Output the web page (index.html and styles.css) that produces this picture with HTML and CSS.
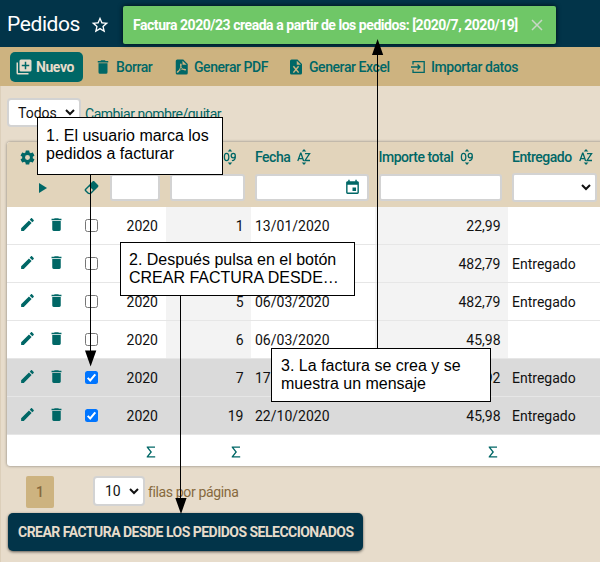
FILE: index.html
```html
<!DOCTYPE html>
<html lang="es">
<head>
<meta charset="utf-8">
<title>Pedidos</title>
<link rel="stylesheet" href="styles.css">
</head>
<body>
<svg class="defs" width="0" height="0">
  <symbol id="pencil" viewBox="0 0 24 24"><path d="M20.71,7.04C21.1,6.65 21.1,6 20.71,5.63L18.37,3.29C18,2.9 17.35,2.9 16.96,3.29L15.12,5.12L18.87,8.87M3,17.25V21H6.75L17.81,9.93L14.06,6.18L3,17.25Z"/></symbol>
  <symbol id="trash" viewBox="0 0 24 24"><path d="M19,4H15.5L14.5,3H9.5L8.5,4H5V6H19M6,19A2,2 0 0,0 8,21H16A2,2 0 0,0 18,19V7H6V19Z"/></symbol>
  <symbol id="sigma" viewBox="0 0 10 12"><path d="M.7 .4H9V1.7H2.6L6 6 2.6 10.3H9.2V11.6H.7V10.5L4.3 6 .7 1.5Z"/></symbol>
  <symbol id="num" viewBox="0 0 14 16"><path d="M7 0 9.3 2.4H4.7ZM7 16 4.7 13.6H9.3Z"/><path class="ln" d="M3.6 4.3C1.9 4.3 1.4 5.7 1.4 8S1.9 11.7 3.6 11.7 5.8 10.3 5.8 8 5.3 4.3 3.6 4.3ZM12.3 6.7C12.3 5.2 11.5 4.3 10.3 4.3S8.2 5.3 8.2 6.6 9 8.8 10.2 8.8 12.3 7.9 12.3 6.7C12.6 10 11.4 11.7 8.9 11.7"/></symbol>
  <symbol id="az" viewBox="0 0 14 16"><path d="M7 0 9.3 2.4H4.7ZM7 16 4.7 13.6H9.3Z"/><path class="ln" d="M.8 12 3.6 4.2H4L6.6 12M1.8 9.6H5.7M8 4.6H12.6L8 11.5H13"/></symbol>
</svg>

<header class="top">
  <h1>Pedidos</h1>
  <svg class="star" viewBox="0 0 24 24"><path d="M12,15.39L8.24,17.66L9.23,13.38L5.91,10.5L10.29,10.13L12,6.09L13.71,10.13L18.09,10.5L14.77,13.38L15.76,17.66M22,9.24L14.81,8.63L12,2L9.19,8.63L2,9.24L7.45,13.97L5.82,21L12,17.27L18.18,21L16.54,13.97L22,9.24Z"/></svg>
  <div class="toast"><span>Factura 2020/23 creada a partir de los pedidos: [2020/7, 2020/19]</span><svg viewBox="0 0 12 12"><path d="M1 1 11 11M11 1 1 11"/></svg></div>
</header>

<nav class="tools">
  <a class="new"><svg class="i18" viewBox="0 0 24 24"><path d="M19,11H15V15H13V11H9V9H13V5H15V9H19M20,2H8A2,2 0 0,0 6,4V16A2,2 0 0,0 8,18H20A2,2 0 0,0 22,16V4A2,2 0 0,0 20,2M4,6H2V20A2,2 0 0,0 4,22H18V20H4V6Z"/></svg>Nuevo</a>
  <a class="t-del"><svg class="i18"><use href="#trash"/></svg>Borrar</a>
  <a class="t-pdf"><svg class="i18" viewBox="0 0 24 24"><path d="M14,9H19.5L14,3.5V9M7,2H15L21,8V20A2,2 0 0,1 19,22H7C5.89,22 5,21.1 5,20V4A2,2 0 0,1 7,2M11.93,12.44C12.34,13.34 12.86,14.08 13.46,14.59L13.87,14.91C13,15.07 11.8,15.35 10.53,15.84L10.42,15.88L10.92,14.84C11.37,13.97 11.7,13.18 11.93,12.44M18.41,16.25C18.59,16.07 18.68,15.84 18.69,15.59C18.72,15.39 18.67,15.2 18.57,15.04C18.28,14.57 17.53,14.35 16.29,14.35L15,14.42L14.13,13.84C13.5,13.32 12.93,12.41 12.53,11.28L12.57,11.14C12.9,9.81 13.21,8.2 12.55,7.54A0.85,0.85 0 0,0 11.94,7.3H11.7C11.33,7.3 11,7.69 10.91,8.07C10.54,9.4 10.76,10.13 11.13,11.34V11.35C10.88,12.23 10.56,13.25 10.05,14.28L9.09,16.08L8.2,16.57C7,17.32 6.43,18.16 6.32,18.69C6.28,18.88 6.3,19.05 6.37,19.23L6.4,19.28L6.88,19.59L7.32,19.7C8.13,19.7 9.05,18.75 10.29,16.63L10.47,16.56C11.5,16.23 12.78,16 14.5,15.81C15.53,16.32 16.74,16.55 17.5,16.55C17.94,16.55 18.24,16.44 18.41,16.25Z"/></svg>Generar PDF</a>
  <a class="t-xls"><svg class="i18" viewBox="0 0 24 24"><path d="M6,2H14L20,8V20A2,2 0 0,1 18,22H6A2,2 0 0,1 4,20V4A2,2 0 0,1 6,2M13,3.5V9H18.5L13,3.5Z"/><path class="x" d="M8.5 11 15.5 19.5M15.5 11 8.5 19.5"/></svg>Generar Excel</a>
  <a class="t-imp"><svg class="i14" viewBox="0 0 14 12"><path class="ln" d="M2 3.5V.7H13.2V11.3H2V8.5M0 6H9M6.5 3.5 9 6 6.5 8.5"/></svg>Importar datos</a>
</nav>

<main>
  <div class="filter"><div class="sel todos">Todos<svg class="chev" viewBox="0 0 10 7"><path d="M1 1 5 5 9 1"/></svg></div><a>Cambiar nombre/quitar</a></div>

  <section class="grid">
    <div class="row head">
      <div class="act"><svg class="cog" viewBox="0 0 24 24"><path d="M12,15.5A3.5,3.5 0 0,1 8.5,12A3.5,3.5 0 0,1 12,8.5A3.5,3.5 0 0,1 15.5,12A3.5,3.5 0 0,1 12,15.5M19.43,12.97C19.47,12.65 19.5,12.33 19.5,12C19.5,11.67 19.47,11.34 19.43,11L21.54,9.37C21.73,9.22 21.78,8.95 21.66,8.73L19.66,5.27C19.54,5.05 19.27,4.96 19.05,5.05L16.56,6.05C16.04,5.66 15.5,5.32 14.87,5.07L14.5,2.42C14.46,2.18 14.25,2 14,2H10C9.75,2 9.54,2.18 9.5,2.42L9.13,5.07C8.5,5.32 7.96,5.66 7.44,6.05L4.95,5.05C4.73,4.96 4.46,5.05 4.34,5.27L2.34,8.73C2.21,8.95 2.27,9.22 2.46,9.37L4.57,11C4.53,11.34 4.5,11.67 4.5,12C4.5,12.33 4.53,12.65 4.57,12.97L2.46,14.63C2.27,14.78 2.21,15.05 2.34,15.27L4.34,18.73C4.46,18.95 4.73,19.03 4.95,18.95L7.44,17.94C7.96,18.34 8.5,18.68 9.13,18.93L9.5,21.58C9.54,21.82 9.75,22 10,22H14C14.25,22 14.46,21.82 14.5,21.58L14.87,18.93C15.5,18.67 16.04,18.34 16.56,17.94L19.05,18.95C19.27,19.03 19.54,18.95 19.66,18.73L21.66,15.27C21.78,15.05 21.73,14.78 21.54,14.63L19.43,12.97Z"/></svg></div>
      <div></div>
      <div class="end"><svg class="srt"><use href="#num"/></svg></div>
      <div>Fecha<svg class="srt"><use href="#az"/></svg></div>
      <div>Importe total<svg class="srt"><use href="#num"/></svg></div>
      <div>Entregado<svg class="srt"><use href="#az"/></svg></div>
    </div>
    <div class="row search">
      <div class="act"><svg class="play" viewBox="0 0 8 10"><path d="M0 0 8 5 0 10Z"/></svg><svg class="eraser" viewBox="0 0 24 24"><path d="M16.24,3.56L21.19,8.5C21.97,9.29 21.97,10.55 21.19,11.34L12,20.53C10.44,22.09 7.91,22.09 6.34,20.53L2.81,17C2.03,16.21 2.03,14.95 2.81,14.16L13.41,3.56C14.2,2.78 15.46,2.78 16.24,3.56M4.22,15.58L7.76,19.11C8.54,19.9 9.8,19.9 10.59,19.11L14.12,15.58L9.17,10.63L4.22,15.58Z"/></svg></div>
      <div class="c-year"><span class="inp"></span></div>
      <div class="c-num"><span class="inp"></span></div>
      <div class="c-date"><span class="inp"><svg class="cal" viewBox="0 0 24 24"><path d="M19,19H5V8H19M16,1V3H8V1H6V3H5C3.89,3 3,3.89 3,5V19A2,2 0 0,0 5,21H19A2,2 0 0,0 21,19V5C21,3.89 20.1,3 19,3H18V1M17,12H12V17H17V12Z"/></svg></span></div>
      <div class="c-tot"><span class="inp"></span></div>
      <div class="c-ent"><span class="inp"><svg class="chev" viewBox="0 0 10 7"><path d="M1 1 5 5 9 1"/></svg></span></div>
    </div>
    <div class="row data"><div class="act"><svg><use href="#pencil"/></svg><svg><use href="#trash"/></svg><i class="cb"></i></div><div>2020</div><div class="sh">1</div><div>13/01/2020</div><div class="sh">22,99</div><div></div></div>
    <div class="row data"><div class="act"><svg><use href="#pencil"/></svg><svg><use href="#trash"/></svg><i class="cb"></i></div><div></div><div class="sh"></div><div></div><div class="sh">482,79</div><div>Entregado</div></div>
    <div class="row data"><div class="act"><svg><use href="#pencil"/></svg><svg><use href="#trash"/></svg><i class="cb"></i></div><div>2020</div><div class="sh">5</div><div>06/03/2020</div><div class="sh">482,79</div><div>Entregado</div></div>
    <div class="row data"><div class="act"><svg><use href="#pencil"/></svg><svg><use href="#trash"/></svg><i class="cb"></i></div><div>2020</div><div class="sh">6</div><div>06/03/2020</div><div class="sh">45,98</div><div></div></div>
    <div class="row data on"><div class="act"><svg><use href="#pencil"/></svg><svg><use href="#trash"/></svg><i class="cb"><svg viewBox="0 0 13 13"><path d="M2.7 6.9 5.2 9.4 10.3 3.3"/></svg></i></div><div>2020</div><div class="sh">7</div><div>17</div><div class="sh">92</div><div>Entregado</div></div>
    <div class="row data on"><div class="act"><svg><use href="#pencil"/></svg><svg><use href="#trash"/></svg><i class="cb"><svg viewBox="0 0 13 13"><path d="M2.7 6.9 5.2 9.4 10.3 3.3"/></svg></i></div><div>2020</div><div class="sh">19</div><div>22/10/2020</div><div class="sh">45,98</div><div>Entregado</div></div>
    <div class="row sum"><div></div><div><svg><use href="#sigma"/></svg></div><div><svg><use href="#sigma"/></svg></div><div></div><div><svg><use href="#sigma"/></svg></div><div></div></div>
  </section>

  <div class="pager"><span class="page">1</span><div class="sel ten">10<svg class="chev" viewBox="0 0 10 7"><path d="M1 1 5 5 9 1"/></svg></div><span class="per">filas por página</span></div>
  <div class="create">CREAR FACTURA DESDE LOS PEDIDOS SELECCIONADOS</div>
</main>

<svg class="arrows" width="600" height="562" viewBox="0 0 600 562">
  <path class="stem" d="M90.5 174V352M180.5 295V500M377.5 348V54"/>
  <path d="M85 350.5H96.3L90.6 366.5ZM175.3 498H186.6L181 514ZM372 55H383.2L377.6 39Z"/>
</svg>
<div class="note n1">1. El usuario marca los<br>pedidos a facturar</div>
<div class="note n2">2. Después pulsa en el botón<br>CREAR FACTURA DESDE…</div>
<div class="note n3">3. La factura se crea y se<br>muestra un mensaje</div>
</body>
</html>
```
FILE: styles.css
```css
* { box-sizing: border-box; }
body { margin: 0; width: 600px; height: 562px; overflow: hidden; position: relative; background: #e7dccb; font: 14px Roboto, sans-serif; color: #111; }
svg { display: block; flex: none; fill: #006766; }
.ln { fill: none; stroke: #006766; stroke-width: 1.3; }
.x { fill: none; stroke: #cdb380; stroke-width: 2; }
.defs { position: absolute; }

.top { height: 47px; background: #023449; display: flex; align-items: center; padding-left: 7px; position: relative; }
.top h1 { margin: 0; font-size: 21px; font-weight: 400; letter-spacing: -.4px; line-height: 24px; color: #fff; width: 83px; white-space: nowrap; }
.star { width: 20px; height: 20px; fill: #fff; margin-top: 3px; }
.toast { position: absolute; left: 123px; top: 6px; width: 433px; height: 38px; background: #6fc767; border-radius: 2px; box-shadow: 0 0 5px rgba(0,0,0,.8); display: flex; align-items: center; justify-content: space-between; padding: 0 13px 0 10px; color: #fff; font-weight: 700; font-size: 14px; letter-spacing: -.46px; white-space: nowrap; }
.toast svg { width: 12px; height: 12px; stroke: #c9d6c6; stroke-width: 1.5; }

.tools { height: 39px; background: #cdb380; display: flex; align-items: center; color: #006766; font-weight: 500; font-size: 14px; letter-spacing: -.43px; }
.tools a { display: flex; align-items: center; height: 30px; white-space: nowrap; }
.i18 { width: 18px; height: 18px; }
.i14 { width: 14px; height: 12px; }
.new { width: 73px; margin-left: 10px; background: #006766; border-radius: 5px; color: #e7dccb; font-weight: 700; padding-left: 5px; gap: 3px; }
.new .i18 { fill: #e7dccb; }
.t-del { margin-left: 11px; width: 78px; gap: 4px; }
.t-pdf { width: 115px; gap: 4px; }
.t-xls { width: 124px; gap: 4px; }
.t-imp { gap: 6px; }

main { border-left: 1px solid #dccfba; padding-left: 6px; height: 476px; }
.filter { height: 56px; display: flex; padding-top: 12px; }
.sel { border: 2px solid #d3d3d3; border-radius: 4px; background: #fff; height: 29px; display: flex; align-items: center; justify-content: space-between; padding: 0 4px 0 9px; }
.todos { width: 74px; }
.chev { width: 10px; height: 7px; fill: none; stroke: #111; stroke-width: 2; }
.filter a { color: #006766; letter-spacing: -.46px; line-height: 33px; margin-left: 4px; }

.grid { width: 620px; height: 324px; border-radius: 3px; background: #fff; overflow: hidden; box-shadow: 0 0 3px rgba(0,0,0,.45); }
.row { display: grid; grid-template-columns: 103px 56px 85px 123.5px 133.5px 118.5px; }
.row > div { display: flex; align-items: center; }
.head { height: 30px; background: #e2d4bb; color: #006766; font-weight: 500; letter-spacing: -.48px; white-space: nowrap; }
.head > div { padding-left: 4px; }
.head .act { padding-left: 12px; }
.head .end { justify-content: flex-end; padding-right: 14px; }
.srt { width: 14px; height: 16px; margin-left: 7px; }
.cog { width: 17px; height: 17px; }
.search { height: 35px; background: #e2d4bb; }
.search > div { padding: 1px 6px 6px 4px; }
.inp { display: flex; align-items: center; justify-content: flex-end; width: 100%; height: 27px; background: #fff; border: 2px solid #d3d3d3; border-radius: 3px; padding-right: 6px; }
.search .c-year { padding-left: 0; }
.search .c-date { padding-bottom: 7px; }
.search .c-ent { padding-right: 30px; }
.c-ent .inp { height: 29px; padding-right: 4px; }
.cal { width: 17px; height: 17px; }
.search .act { padding-left: 32px; }
.play { width: 8px; height: 10px; }
.eraser { width: 17px; height: 17px; margin-left: 36px; }

.data { height: 38px; border-bottom: 1px solid #e6e6e6; }
.data > div { padding-left: 4px; }
.data .act { padding-left: 12px; }
.data .act > svg { width: 17px; height: 17px; margin: 0 12px 2px 0; }
.data > div:nth-child(2) { justify-content: flex-end; padding-right: 8px; }
.data .sh { background: #f3f3f3; justify-content: flex-end; padding-right: 7.5px; }
.on, .data.on .sh { background: #dadada; }
.cb { width: 13px; height: 13px; border: 1px solid #767676; border-radius: 2.5px; background: #fff; margin-left: 8px; }
.on .cb { background: #0075ff; border: 0; }
.cb svg { fill: none; stroke: #fff; stroke-width: 2; }
.sum { height: 31px; }
.sum > div { justify-content: flex-end; padding-right: 10px; }
.sum svg { width: 10px; height: 12px; margin-top: 3px; }

.pager { display: flex; height: 47px; padding: 10px 0 0 19px; }
.page { width: 28px; height: 32px; background: #cdb380; border-radius: 2px; color: #86693d; font-weight: 500; display: flex; align-items: center; justify-content: center; }
.ten { width: 52px; margin-left: 39px; padding-left: 10px; height: 30px; }
.per { color: #86693d; letter-spacing: -.36px; line-height: 33px; margin-left: 3px; }
.create { width: 355px; height: 38px; margin-left: 1px; border-radius: 5px; background: #023449; color: #e7dccb; font-weight: 700; font-size: 14px; letter-spacing: -.52px; line-height: 39px; padding-left: 10px; white-space: nowrap; box-shadow: 0 1px 3px rgba(0,0,0,.6); }

.arrows { position: absolute; left: 0; top: 0; fill: #000; }
.arrows path { fill: #000; }
.arrows .stem { fill: none; stroke: #000; stroke-width: 1; }
.note { position: absolute; background: #fff; border: 1px solid #000; font: 16px/18px "Liberation Sans", Arial, sans-serif; color: #000; white-space: nowrap; padding: 9px 0 0 8px; }
.n1 { left: 37px; top: 117px; width: 186px; height: 58px; }
.n2 { left: 120px; top: 242px; width: 235px; height: 54px; padding-top: 8px; }
.n3 { left: 271px; top: 348px; width: 220px; height: 54px; padding-top: 8px; padding-left: 9px; }
```
